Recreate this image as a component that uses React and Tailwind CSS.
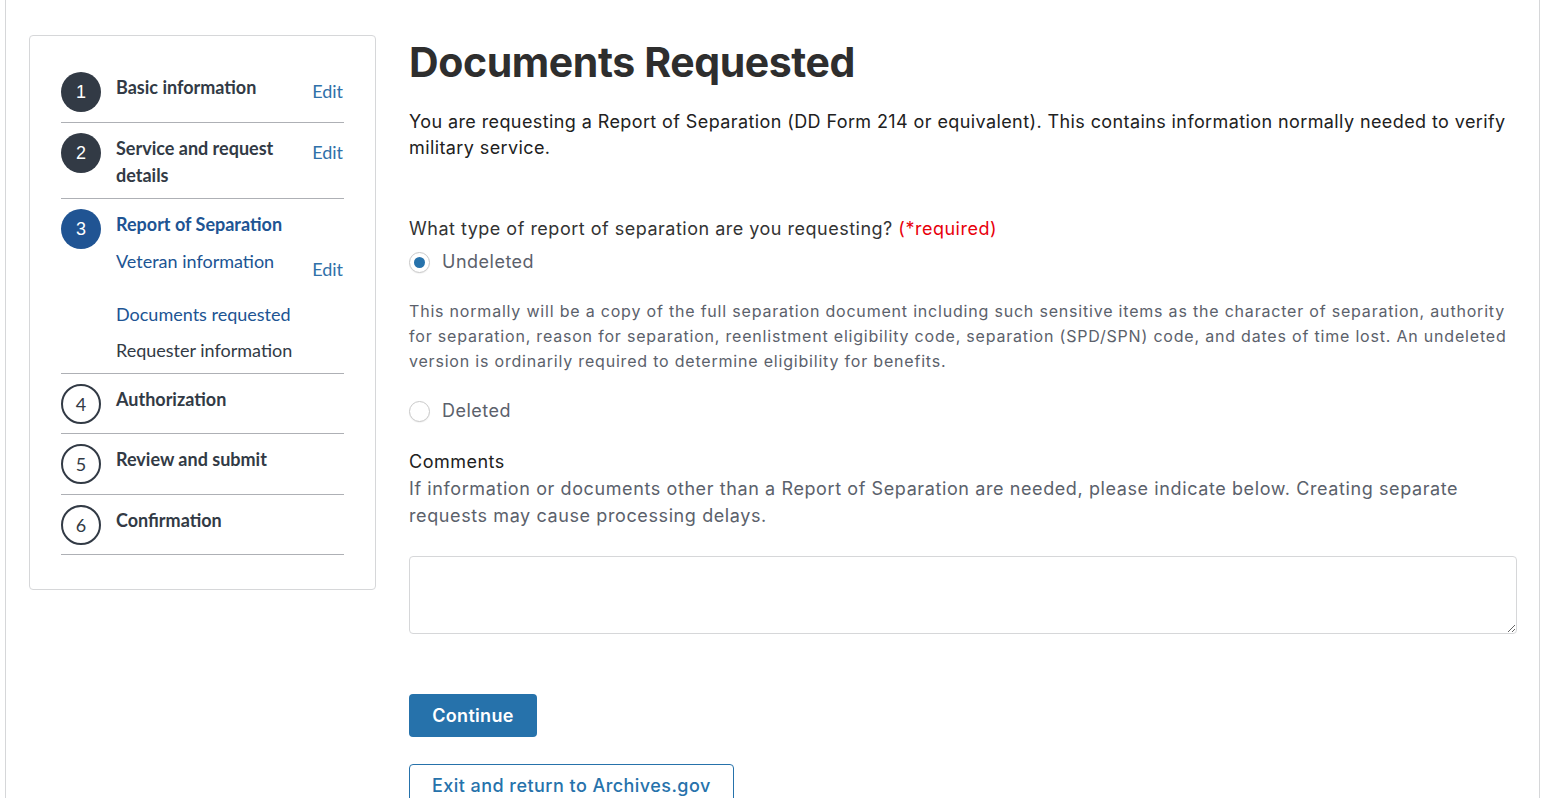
import React, { useState } from "react";

const steps = [
  { n: 1, title: "Basic information", state: "done", edit: true, gap: "mb-[10px]" },
  { n: 2, title: "Service and request details", state: "done", edit: true, gap: "mb-[10px]" },
  { n: 3, title: "Report of Separation", state: "current", gap: "mb-[10px]" },
  { n: 4, title: "Authorization", state: "todo", gap: "mb-[9px]" },
  { n: 5, title: "Review and submit", state: "todo", gap: "mb-[10px]" },
  { n: 6, title: "Confirmation", state: "todo", gap: "mb-[9px]" },
];

const StepCircle = ({ n, state }) => {
  if (state === "todo") {
    return (
      <span className="w-10 h-10 shrink-0 rounded-full border-2 border-[#323a45] bg-white text-[#323a45] flex items-center justify-center text-[18px] font-['Lato',sans-serif]">
        {n}
      </span>
    );
  }
  return (
    <span
      className={`w-10 h-10 shrink-0 rounded-full text-white flex items-center justify-center text-[18px] font-['Liberation_Sans',Arial,sans-serif] ${
        state === "current" ? "bg-[#205493]" : "bg-[#323a45]"
      }`}
    >
      {n}
    </span>
  );
};

const EditLink = ({ className = "" }) => (
  <a href="#" className={`text-[#3071a9] text-[18px] leading-[27px] pr-[1px] ${className}`}>
    Edit
  </a>
);

const Sidebar = () => (
  <aside className="w-[347px] shrink-0 self-start border border-[#d6d7d9] rounded-[4px] pl-[31px] pr-[31px] pt-[26px] pb-[34px] font-['Lato',sans-serif]">
    <ol>
      {steps.map((s) => (
        <li key={s.n} className="flex items-start border-b border-[#aeb0b5] pt-[10px]">
          <div className={`${s.gap} mr-[15px]`}>
            <StepCircle n={s.n} state={s.state} />
          </div>
          <div className="flex-1 pt-[2px] pb-[9px]">
            <div className="flex justify-between items-start">
              <span
                className={`text-[18px] leading-[27px] font-bold ${
                  s.state === "current" ? "text-[#205493]" : "text-[#323a45]"
                } ${s.n === 2 ? "w-[170px]" : ""}`}
              >
                {s.title}
              </span>
              {s.edit && <EditLink className="mt-[4px]" />}
            </div>
            {s.state === "current" && (
              <ul className="text-[18px] leading-[27px]">
                <li className="flex justify-between items-start mt-[10px]">
                  <a href="#" className="text-[#205493]">Veteran information</a>
                  <EditLink className="mt-[8px]" />
                </li>
                <li className="mt-[18px]">
                  <a href="#" className="text-[#205493]">Documents requested</a>
                </li>
                <li className="mt-[9px] text-[#323a45]">Requester information</li>
              </ul>
            )}
          </div>
        </li>
      ))}
    </ol>
  </aside>
);

const Radio = ({ checked, label, onClick }) => (
  <label className="flex items-center gap-[12px] cursor-pointer" onClick={onClick}>
    <span className="w-[21px] h-[21px] rounded-full border border-[#c9c9c9] bg-white flex items-center justify-center shadow-[0_1px_1px_rgba(0,0,0,0.05)]">
      {checked && <span className="w-[11px] h-[11px] rounded-full bg-[#2672ab]" />}
    </span>
    <span className="text-[18px] tracking-[0.5px] text-[#5b616b] leading-[26px]">{label}</span>
  </label>
);

export default function App() {
  const [type, setType] = useState("undeleted");

  return (
    <div className="bg-white">
      <div className="ml-[5px] mr-[12px] min-h-[797px] border-x border-[#d6d7d9] flex pl-[23px] pr-[22px] pt-[35px]">
        <Sidebar />
        <main className="flex-1 ml-[33px] font-['Inter',sans-serif] text-[#212121]">
          <h1 className="text-[41px] tracking-[-0.4px] leading-[56px] font-bold text-[#2e2e2e] -mt-[1px]">
            Documents Requested
          </h1>
          <p className="mt-[19px] text-[18px] tracking-[0.4px] leading-[26px]">
            You are requesting a Report of Separation (DD Form 214 or equivalent). This contains information
            normally needed to verify military service.
          </p>

          <fieldset className="mt-[55px]">
            <legend className="text-[18px] tracking-[0.5px] leading-[26px] text-[#333]">
              What type of report of separation are you requesting?{" "}
              <span className="text-[#e8000b]">(*required)</span>
            </legend>
            <div className="mt-[7px]">
              <Radio checked={type === "undeleted"} label="Undeleted" onClick={() => setType("undeleted")} />
            </div>
            <p className="mt-[24px] text-[16px] tracking-[0.8px] leading-[25px] text-[#5b616b]">
              This normally will be a copy of the full separation document including such sensitive items as the
              character of separation, authority for separation, reason for separation, reenlistment eligibility
              code, separation (SPD/SPN) code, and dates of time lost. An undeleted version is ordinarily required
              to determine eligibility for benefits.
            </p>
            <div className="mt-[24px]">
              <Radio checked={type === "deleted"} label="Deleted" onClick={() => setType("deleted")} />
            </div>
          </fieldset>

          <div className="mt-[25px]">
            <label className="block text-[18px] tracking-[0.5px] leading-[26px] text-[#212121]">Comments</label>
            <p className="text-[18px] tracking-[0.6px] leading-[27px] text-[#5b616b]">
              If information or documents other than a Report of Separation are needed, please indicate below.
              Creating separate requests may cause processing delays.
            </p>
            <textarea className="mt-[27px] block w-full h-[78px] border border-[#d6d7d9] rounded-[4px] p-2 text-[17px] outline-none" />
          </div>

          <button className="mt-[60px] block h-[43px] w-[128px] rounded-[4px] bg-[#2672ab] text-white text-[18px] tracking-[0.3px] font-semibold">
            Continue
          </button>
          <button className="mt-[27px] block h-[43px] px-[22px] rounded-[4px] border border-[#2672ab] text-[#2672ab] text-[18px] tracking-[0.45px] font-medium bg-white">
            Exit and return to Archives.gov
          </button>
        </main>
      </div>
      <footer className="h-[120px] bg-[#2f2f2f]" />
    </div>
  );
}
